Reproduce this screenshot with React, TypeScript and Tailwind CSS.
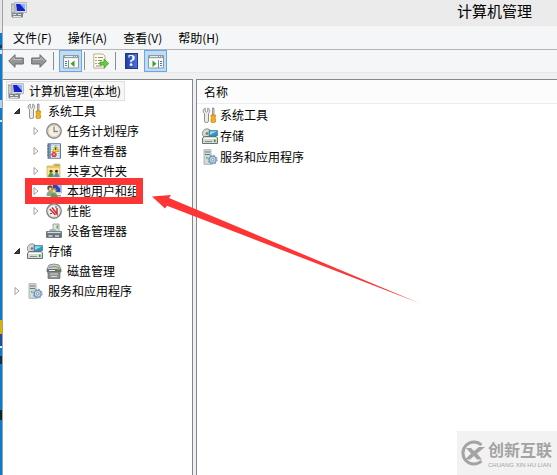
import { ReactNode } from 'react';

function Svg({ children, className = 'w-4 h-4' }: { children: ReactNode; className?: string }) {
  return (
    <svg viewBox="0 0 16 16" className={`${className} shrink-0`} aria-hidden="true">
      {children}
    </svg>
  );
}

function ComputerIcon() {
  return (
    <Svg>
      <rect x="0" y="2" width="4" height="9" fill="#c8ccc8" stroke="#7d8583" strokeWidth=".7" />
      <path d="M3.500 .5h12v10h-10z" fill="#d9dde3" stroke="#a5aab2" strokeWidth=".7" />
      <path d="M5 2h9v7H6z" fill="#1420c8" />
      <path d="M9 2h5v6z" fill="#86b4ff" />
      <path d="M8 10h4l1 2H7z" fill="#9da3a5" />
      <rect x="0.5" y="11" width="11.500" height="4.500" rx="1" fill="#7c888b" />
      <path d="M2 12.500h3M7 12.500h3M2 14.500h8" stroke="#dfe5e6" />
    </Svg>
  );
}

function ToolsIcon() {
  return (
    <Svg>
      <path d="M3.200 1v3.200l1.300 1L5.800 4.200V1c2.400 1 2.700 4 .7 5.400V14a2 1.600 0 0 1-4 0V6.400C.4 5 .8 2 3.200 1z" fill="#ececec" stroke="#858585" strokeWidth=".9" />
      <path d="M10.500 1h1.500v7h-1.500z" fill="#ddd" stroke="#707070" strokeWidth=".7" />
      <path d="M9 8h4.500v2l-.7 1 .7 1v3q-2.200 1.500-4.500 0v-3l.7-1L9 10z" fill="#f5ae18" stroke="#c77e08" strokeWidth=".7" />
    </Svg>
  );
}

function ClockIcon() {
  return (
    <Svg>
      <circle cx="8" cy="8" r="7.200" fill="#f6f1df" stroke="#8d8d8d" strokeWidth="1.500" />
      <circle cx="8" cy="8" r="5.700" fill="#f9f0d8" stroke="#cccabf" strokeWidth=".8" />
      <path d="M8 3.500V8.500h4" fill="none" stroke="#7b88a5" strokeWidth="1.300" />
    </Svg>
  );
}

function EventIcon() {
  return (
    <Svg>
      <rect x="2" y=".8" width="12.500" height="14.400" fill="#7b9cc4" stroke="#4d668a" strokeWidth=".8" />
      <path d="M5 1h9v14H5z" fill="#c2d2e7" />
      <path d="M5 3.500h8M5 5.500h8M5 7.500h8M5 9.500h8M5 11.500h8M5 13.500h8" stroke="#f4f7fb" strokeWidth=".9" />
      <path d="M1 3h2.500M1 6h2.500M1 9h2.500M1 12h2.500" stroke="#666" />
      <path d="M9.700 2.500 13 8.500H6.500z" fill="#ffd633" stroke="#b28d00" strokeWidth=".6" />
      <path d="M9.700 4.500v2.500" stroke="#222" />
      <circle cx="8" cy="11.500" r="2.600" fill="#d92f26" />
      <path d="m7 10.500 2 2m0-2-2 2" stroke="#fff" strokeWidth=".8" />
    </Svg>
  );
}

function SharedIcon() {
  return (
    <Svg>
      <path d="M1 3h6l1-2h6v13H1z" fill="#eec65d" stroke="#d5ae55" strokeWidth=".7" />
      <path d="M1.500 5h12v8.500h-12z" fill="#fbe394" />
      <path d="M9 2.500h4" stroke="#6fa0d8" />
      <circle cx="5" cy="8.300" r="1.500" fill="#5d4525" />
      <path d="M2.300 14q0-4 2.700-4t2.800 4z" fill="#4e9a4a" />
      <circle cx="10.500" cy="8.300" r="1.500" fill="#3c3022" />
      <path d="M8.200 14q0-4 2.400-4t2.700 4z" fill="#548fc0" />
    </Svg>
  );
}

function UsersIcon() {
  return (
    <Svg>
      <path d="M6 1h9.500v9H6z" fill="#e1e5ee" stroke="#9ba2b4" strokeWidth=".6" />
      <path d="M7 2h7.500v7H7z" fill="#2846bd" />
      <path d="M11 2h3.500v4z" fill="#9ec6f6" />
      <path d="M9 12h6v1.500H9z" fill="#999" />
      <circle cx="4" cy="5" r="2.700" fill="#665436" />
      <circle cx="4.300" cy="6" r="1.500" fill="#f2cda2" />
      <path d="M.5 13q0-5 3.500-5t4 5z" fill="#86a986" />
      <circle cx="8" cy="7.300" r="2.500" fill="#b78a3a" />
      <circle cx="8" cy="8" r="1.500" fill="#f6d5b2" />
      <path d="M4.500 15q0-5 3.500-5t4 5z" fill="#5f9e54" />
    </Svg>
  );
}

function PerformanceIcon() {
  return (
    <Svg>
      <circle cx="8" cy="8" r="7.200" fill="#f8f8f8" stroke="#808080" strokeWidth="1.400" />
      <circle cx="8" cy="8" r="5.700" fill="none" stroke="#c6c6c6" strokeWidth=".6" />
      <path d="m3.800 6 5.700 6M6 4.500l5 6.500V5" fill="none" stroke="#d3262e" strokeWidth="1.500" />
      <path d="M4 10.500h2M9 4h2" stroke="#444" />
    </Svg>
  );
}

function DeviceIcon() {
  return (
    <Svg>
      <path d="M7 1h6v8H7z" fill="#dfe4e4" stroke="#8e9696" strokeWidth=".8" />
      <path d="M10.500 2.500h1.500v3h-1.500z" fill="#43bd38" />
      <path d="m3 8 1-2h5l2 2z" fill="#abb3b6" />
      <path d="M.5 8.500h15v6H.5z" fill="#65747c" stroke="#586267" strokeWidth=".7" />
      <path d="M1.500 9.500h13" stroke="#d5dcdf" strokeWidth="1.200" />
      <path d="M2.500 12h4v2h-4zM9 12h4v2H9z" fill="#b7c1c5" />
    </Svg>
  );
}

function StorageIcon() {
  return (
    <Svg>
      <circle cx="5" cy="5.500" r="4.700" fill="#d3d7d6" stroke="#7b8180" strokeWidth=".8" />
      <circle cx="5" cy="5.500" r="1.300" fill="#777" />
      <path d="M7 2.500h8.500V8H7z" fill="#2599cb" stroke="#617682" strokeWidth=".7" />
      <path d="M8 3.300h7L8 7z" fill="#8bdcf4" />
      <path d="m.5 10 2-1.500h11.500l1.500 1.500v5.500H.5z" fill="#d5d9d5" stroke="#5e6561" strokeWidth=".9" />
      <path d="M1.500 10.500h13" stroke="#fff" />
      <path d="M12 11.500h1.500V14H12z" fill="#20a629" />
      <path d="M3 13.500h7" stroke="#8a918c" />
    </Svg>
  );
}

function DiskIcon() {
  return (
    <Svg>
      <path d="m1 6 2-4q5-2 10 0l2 4v3H1z" fill="#cdcdca" stroke="#6d6d6b" strokeWidth=".7" />
      <path d="M3 4.500q5-2 10 0" fill="none" stroke="#888" />
      <path d="M1 6h14v3.500H1z" fill="#696f70" />
      <path d="M3 7.500h6" stroke="#eee" />
      <path d="M11.500 4.500h2V7h-2z" fill="#78c927" />
      <path d="M2 10h12v5.500H2z" fill="#8b8f8e" stroke="#686c6a" strokeWidth=".7" />
      <path d="M4 11h8M5 13.500h6" stroke="#dedede" />
    </Svg>
  );
}

function ServicesIcon() {
  return (
    <Svg>
      <path d="M2 .7h7v14.600H2z" fill="#d4dbdd" stroke="#9aa7a8" strokeWidth=".8" />
      <path d="M3 3h5M3 5.500h5" stroke="#6c7778" strokeWidth="1.200" />
      <path d="M4 8h1.500v1.500H4z" fill="#49b540" />
      <circle cx="10.700" cy="10.700" r="3.500" fill="#bfd4e5" stroke="#6e93b1" strokeWidth="1.300" />
      <circle cx="10.700" cy="10.700" r="4.500" fill="none" stroke="#6e93b1" strokeDasharray="1.700 1.800" />
      <circle cx="10.700" cy="10.700" r="1.200" fill="#fff" stroke="#587e9b" strokeWidth=".7" />
    </Svg>
  );
}

function ArrowIcon({ flip = false }: { flip?: boolean }) {
  return (
    <svg viewBox="0 0 16 16" className={flip ? 'w-4 h-4 -scale-x-100' : 'w-4 h-4'} aria-hidden="true">
      <path d="M.7 8 7 1.700v3.300h8.300v6H7v3.300z" fill="#959595" stroke="#6a6a6a" />
      <path d="M2.500 8 6 4.500v2h8" fill="none" stroke="#c3c3c3" />
    </svg>
  );
}

function PaneIcon({ right = false }: { right?: boolean }) {
  return (
    <Svg>
      <path d="M.5 2.500h15v12.500H.5z" fill="#fafafa" stroke="#8c98a4" />
      <path d="M1 3h14v3H1z" fill="#919daa" />
      <path d="M2 3.500h8M11 3.500h1M13 3.500h1M1 5.500h14" stroke="#fff" strokeWidth=".8" />
      {right ? (
        <>
          <path d="M10.500 7v8" stroke="#7c8b9a" />
          <path d="M12 8.500h2M12 10.500h2M12 12.500h2" stroke="#4779a6" />
          <path d="m4.500 7.500 4 3.200-4 3.200z" fill="#35a51e" />
        </>
      ) : (
        <>
          <path d="M5.500 7v8" stroke="#7c8b9a" />
          <path d="M2 8.500h2M2 10.500h2M2 12.500h2" stroke="#4779a6" />
          <path d="M11.500 7.500v6.400l-4-3.200z" fill="#35a51e" />
        </>
      )}
    </Svg>
  );
}

function ExportIcon() {
  return (
    <Svg>
      <path d="M.8 1h9.200l2 2v12.200H.8z" fill="#fffbe5" stroke="#a99f82" strokeWidth=".8" />
      <path d="M2.500 4.500h1M2.500 7.500h1M2.500 10.500h1" stroke="#555" />
      <path d="M5 4.500h5M5 7.500h4M5 10.500h3M3 13h6" stroke="#8a8a91" />
      <path d="M7 9h4V6l4.700 4.500L11 15v-3H7z" fill="#69cc3a" stroke="#349d20" strokeWidth=".7" />
    </Svg>
  );
}

function HelpIcon() {
  return (
    <span className="flex w-[13px] h-4 items-center justify-center border border-[#23388d] bg-linear-to-r from-[#23409f] to-[#4a72dc] font-['Liberation_Serif',serif] text-[16px] leading-4 font-bold text-white">
      ?
    </span>
  );
}

function Separator() {
  return <span className="w-px h-[18px] bg-[#8d8d8d]" />;
}

type Node = {
  label: string;
  icon: ReactNode;
  level: number;
  state?: 'open' | 'closed';
  marked?: boolean;
};

const tree: Node[] = [
  { label: '系统工具', icon: <ToolsIcon />, level: 1, state: 'open' },
  { label: '任务计划程序', icon: <ClockIcon />, level: 2, state: 'closed' },
  { label: '事件查看器', icon: <EventIcon />, level: 2, state: 'closed' },
  { label: '共享文件夹', icon: <SharedIcon />, level: 2, state: 'closed' },
  { label: '本地用户和组', icon: <UsersIcon />, level: 2, state: 'closed', marked: true },
  { label: '性能', icon: <PerformanceIcon />, level: 2, state: 'closed' },
  { label: '设备管理器', icon: <DeviceIcon />, level: 2 },
  { label: '存储', icon: <StorageIcon />, level: 1, state: 'open' },
  { label: '磁盘管理', icon: <DiskIcon />, level: 2 },
  { label: '服务和应用程序', icon: <ServicesIcon />, level: 1, state: 'closed' },
];

const items = [
  { label: '系统工具', icon: <ToolsIcon /> },
  { label: '存储', icon: <StorageIcon /> },
  { label: '服务和应用程序', icon: <ServicesIcon /> },
];

const menus = ['文件(F)', '操作(A)', '查看(V)', '帮助(H)'];

function Expander({ state }: { state?: 'open' | 'closed' }) {
  return (
    <svg viewBox="0 0 8 8" className="w-2 h-2 shrink-0" aria-hidden="true">
      {state === 'open' && <path d="M6.500 1.500v5H1.500z" fill="#404040" stroke="#262626" />}
      {state === 'closed' && <path d="M2 .5v7L6 4z" fill="#fff" stroke="#a0a0a0" />}
    </svg>
  );
}

function TreeRow({ node }: { node: Node }) {
  return (
    <li className={node.level === 1 ? 'relative pl-[9px]' : 'relative pl-7'}>
      <button className="flex h-5 items-center whitespace-nowrap">
        <Expander state={node.state} />
        <span className="ml-[6px] mr-[5px]">{node.icon}</span>
        {node.label}
      </button>
      {node.marked && (
        <span className="absolute left-[21px] -top-[3px] w-[118px] h-[26px] border-[7px] border-[#fd3535]" />
      )}
    </li>
  );
}

/* Sliver of the desktop and its icons left of the window */
function DesktopEdge() {
  return (
    <div className="flex w-[2px] shrink-0 flex-col bg-[#0a7dd3]">
      <div className="h-[33px] bg-[#e6e6e6]" />
      <div className="mt-3 h-[3px] bg-[#173a5c]" />
      <div className="mt-[2px] h-1 bg-[#dfe9f1]" />
      <div className="mt-[46px] h-2 bg-[#b4d3ea]" />
      <div className="mt-3 h-[2px] bg-[#d6e6f2]" />
      <div className="mt-[198px] h-[14px] bg-[#d8b400]" />
      <div className="h-3 bg-[#1c4fa3]" />
      <div className="h-[2px] bg-[#e8eef5]" />
      <div className="mt-2 h-[8px] bg-[#12304d]" />
      <div className="mt-[46px] h-[10px] bg-[#07271f]" />
    </div>
  );
}

function Watermark() {
  return (
    <div className="absolute right-0 bottom-0 flex w-[100px] h-11 items-center gap-[2px] bg-[#f2f2f2] pl-[3px] text-[#a3a3a3]">
      <svg viewBox="0 0 26 26" className="w-[26px] h-[26px] shrink-0" aria-hidden="true">
        <path d="M21.500 5A11 11 0 1 0 21.500 21" fill="none" stroke="#a3a3a3" strokeWidth="3" />
        <path d="M6 8h5l3 3 5-4h6l-8 6.500 5 6h-5l-3-3.500-4 3.500H5l6-6z" fill="#a3a3a3" />
      </svg>
      <div className="whitespace-nowrap">
        <div className="text-[16px] leading-6 font-bold">创新互联</div>
        <div className="font-['Liberation_Sans',sans-serif] text-[6px] leading-[8px]">CHUANG XIN HU LIAN</div>
      </div>
    </div>
  );
}

export default function App() {
  return (
    <div className="relative flex h-screen overflow-hidden font-['Noto_Sans_CJK_SC',sans-serif] text-[12px] leading-4 text-black">
      <DesktopEdge />

      <div className="flex min-w-0 flex-1 flex-col border-l border-[#a0a0a0] bg-[#f0f0f0]">
        {/* Title bar */}
        <header className="flex h-[26px] shrink-0 items-center justify-between bg-[#ebebeb] pl-2 pr-[25px]">
          <span className="-mt-[6px]"><ComputerIcon /></span>
          <h1 className="-mt-1 text-[15px] leading-5">计算机管理</h1>
        </header>

        <nav className="flex h-6 shrink-0 items-center gap-4 border-b border-[#b5b5b9] bg-[#f5f6f7] pl-[10px]">
          {menus.map((menu) => (
            <button key={menu}>{menu}</button>
          ))}
        </nav>

        <div className="flex h-[23px] shrink-0 items-center border-b border-[#e6e7e8] bg-[#f5f6f7] pl-[5px]">
          <button aria-label="后退"><ArrowIcon /></button>
          <button aria-label="前进" className="ml-[7px] mr-[6px]"><ArrowIcon flip /></button>
          <Separator />
          <button aria-label="显示控制台树" className="ml-[5px] mr-[2px] flex w-[23px] h-[22px] items-center justify-center border border-[#66a7e8] bg-[#c0dcf3]">
            <PaneIcon />
          </button>
          <Separator />
          <button aria-label="导出列表" className="ml-2 mr-[6px]"><ExportIcon /></button>
          <Separator />
          <button aria-label="帮助" className="ml-[9px] mr-[6px]"><HelpIcon /></button>
          <button aria-label="显示操作窗格" className="flex w-[23px] h-[22px] items-center justify-center border border-[#66a7e8] bg-[#c0dcf3]">
            <PaneIcon right />
          </button>
        </div>

        {/* Panes */}
        <div className="flex min-h-0 flex-1 gap-[3px] pt-[6px]">
          <aside className="w-[190px] shrink-0 border-t border-r border-[#828790] bg-white pt-px pl-px">
            <button className="ml-[2px] flex h-5 items-center gap-[5px] whitespace-nowrap border border-[#dedede] bg-[#f7f7f7] pl-px pr-[3px]">
              <ComputerIcon />
              计算机管理(本地)
            </button>
            <ul>
              {tree.map((node) => (
                <TreeRow key={node.label} node={node} />
              ))}
            </ul>
          </aside>

          <main className="min-w-0 flex-1 border-t border-l border-[#828790] bg-white">
            <div className="flex h-6 items-center border-b border-[#e5eff7] bg-[#fcfcfc] pl-[7px]">名称</div>
            <ul>
              {items.map((item) => (
                <li key={item.label}>
                  <button className="flex h-[21px] items-center gap-[2px] whitespace-nowrap pl-[5px]">
                    {item.icon}
                    {item.label}
                  </button>
                </li>
              ))}
            </ul>
          </main>
        </div>
      </div>

      {/* Pointer to the marked row */}
      <svg viewBox="0 0 268 110" className="pointer-events-none absolute left-[152px] top-[194px] w-[268px] h-[110px]" aria-hidden="true">
        <path d="M0 2.500 19 1l-2 3 250 105L15 11.700 13 14.500z" fill="#fd3535" />
      </svg>

      <Watermark />
    </div>
  );
}
